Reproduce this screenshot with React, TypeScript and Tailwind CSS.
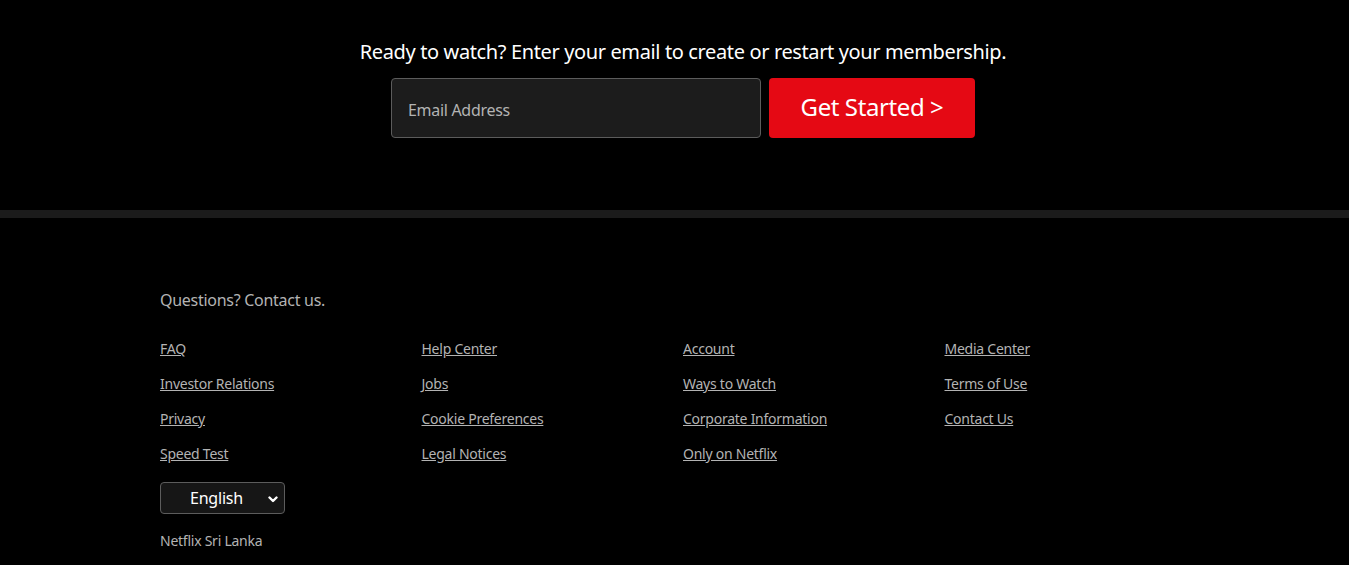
const columns: string[][] = [
  ["FAQ", "Investor Relations", "Privacy", "Speed Test"],
  ["Help Center", "Jobs", "Cookie Preferences", "Legal Notices"],
  ["Account", "Ways to Watch", "Corporate Information", "Only on Netflix"],
  ["Media Center", "Terms of Use", "Contact Us"],
];

export default function App() {
  return (
    <div className="min-h-[565px] bg-black text-white [font-family:'Noto_Sans',sans-serif]">
      {/* CTA */}
      <section className="pl-[17px] pt-[38px] pb-[72px]">
        <div className="flex flex-col items-center">
          <h3 className="text-[20px] leading-[28px] tracking-[-0.37px]">
            Ready to watch? Enter your email to create or restart your membership.
          </h3>
          <form className="mt-[12px] flex gap-2" onSubmit={(e) => e.preventDefault()}>
            <input
              placeholder="Email Address"
              className="h-[60px] w-[370px] rounded-[4px] border border-[#5c5c5c] bg-[#1c1c1c] px-4 pt-[3px] text-[16px] tracking-[-0.3px] text-white placeholder:text-[#b3b3b3] outline-none"
            />
            <button className="h-[60px] w-[206px] rounded-[4px] bg-[#e50914] pb-[2px] text-[24px] tracking-[-0.4px] text-white">
              Get Started &gt;
            </button>
          </form>
        </div>
      </section>

      <div className="h-2 bg-[#1b1b1b]" />

      {/* footer */}
      <footer className="ml-[160px] w-[1046px] pt-[70px] pb-[14px] text-[#b3b3b3]">
        <p className="text-[16px] leading-6 tracking-[-0.28px]">Questions? Contact us.</p>
        <div className="mt-[27px] grid grid-cols-4">
          {columns.map((col, i) => (
            <ul key={i} className="flex flex-col gap-[15px]">
              {col.map((l) => (
                <li key={l} className="text-[14px] leading-5 tracking-[-0.25px]">
                  <a href="#" className="underline">
                    {l}
                  </a>
                </li>
              ))}
            </ul>
          ))}
        </div>
        <div className="relative mt-[18px] flex h-8 w-[125px] items-center justify-center rounded-[4px] border border-[#5c5c5c] bg-[#161616] text-[16px] text-white">
          <span className="pr-[12px] tracking-[-0.2px]">English</span>
          <svg
            viewBox="0 0 10 7"
            className="absolute right-[6px] top-[13px] h-[7px] w-[10px]"
            fill="none"
            stroke="currentColor"
            strokeWidth="2.4"
            strokeLinecap="round"
            strokeLinejoin="round"
          >
            <path d="M1.5 1.5 L5 5 L8.5 1.5" />
          </svg>
        </div>
        <p className="mt-[17px] text-[14px] leading-5 tracking-[-0.25px]">Netflix Sri Lanka</p>
      </footer>
    </div>
  );
}
